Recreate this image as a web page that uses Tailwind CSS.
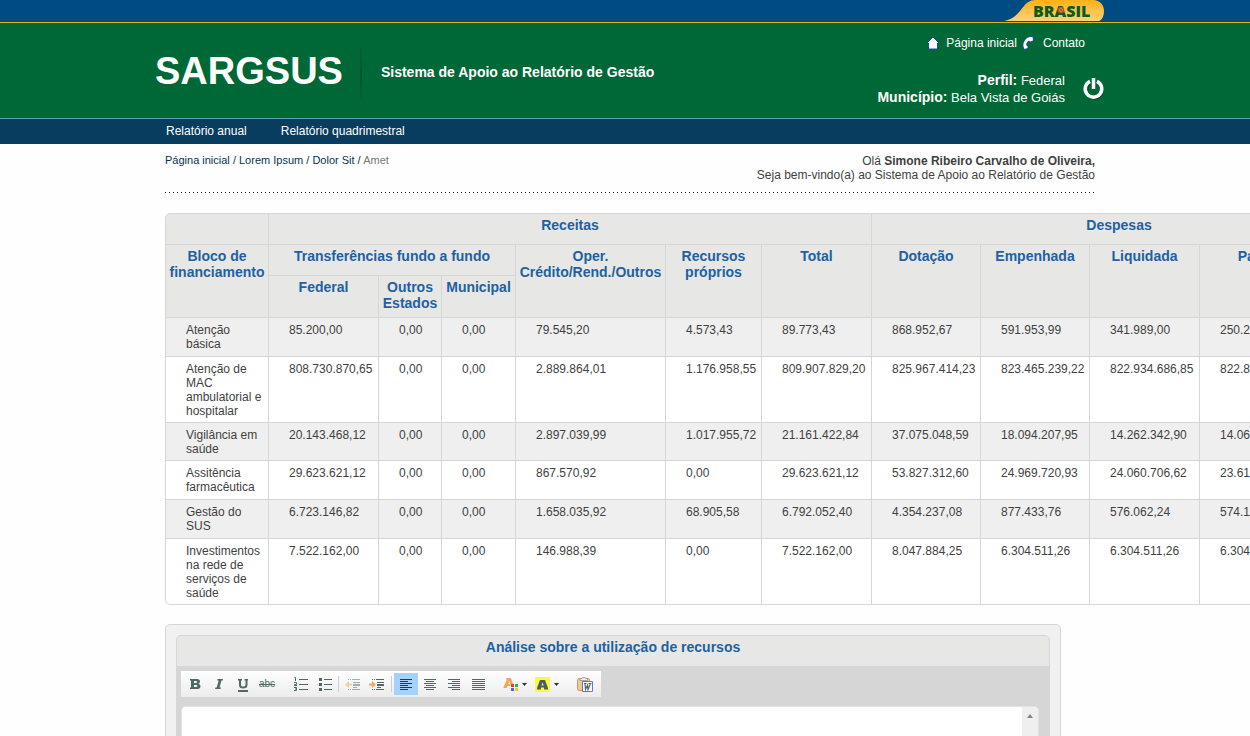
<!DOCTYPE html>
<html lang="pt-BR">
<head>
<meta charset="utf-8">
<meta name="viewport" content="width=device-width, initial-scale=1">
<title>SARGSUS - Sistema de Apoio ao Relatório de Gestão</title>
<script src="https://cdn.jsdelivr.net/npm/@tailwindcss/browser@4"></script>
</head>
<body class="overflow-x-hidden bg-[#fefefe] font-['Liberation_Sans',Arial,sans-serif] text-xs leading-[14px] text-[#3f3f3f]">

<div class="border-b border-[#e0b31c] bg-[#004b82]">
  <div class="mx-auto flex h-[22px] max-w-[960px] justify-end pr-px">
    <a href="#" aria-label="Brasil" class="relative block">
      <svg width="100" height="22" viewBox="0 0 100 22" class="block">
        <defs><linearGradient id="gold" x1="0" y1="0" x2="0" y2="1"><stop offset="0" stop-color="#fcb116"/><stop offset="1" stop-color="#fdd27c"/></linearGradient></defs>
        <path d="M0 21 C11 19 15 12 20 6 C24 1 27 0 33 0 H89 C96 0 100 5 100 11 C100 16 98 20 95 21 Z" fill="url(#gold)"/>
      </svg>
      <span class="absolute inset-0 pl-[29px] font-['Open_Sans',sans-serif] text-base leading-[22px] font-extrabold text-[#0b5a1e]">BRASIL</span>
      <svg width="8" height="8" viewBox="0 0 8 8" class="absolute top-[6px] left-[53px]"><circle cx="4" cy="4" r="2.500" fill="#f5a623" stroke="#d9481f" stroke-width="1.500"/><circle cx="4" cy="4" r="1" fill="#1c5fa8"/></svg>
    </a>
  </div>
</div>

<header class="bg-[#006837] text-white">
  <div class="mx-auto flex h-[95px] max-w-[940px] items-start">
    <h1 class="pt-[26px] text-[38px] leading-[44px] font-bold">SARGSUS</h1>
    <div class="mt-5 ml-[17px] h-[62px] w-[2px] bg-linear-to-b from-transparent via-[#00502a] to-transparent"></div>
    <p class="mt-[41px] ml-[19px] text-sm leading-4 font-bold">Sistema de Apoio ao Relatório de Gestão</p>
    <div class="ml-auto pr-[10px]">
      <nav class="flex items-center justify-end pt-3 leading-4" aria-label="Atalhos">
        <a href="#" class="flex items-center">
          <svg width="14" height="14" viewBox="0 0 14 14" class="mr-[6px]"><path d="M7 1 L13 7 H11.500 V13 H2.500 V7 H1 Z" fill="#fff" stroke="#174f9c" stroke-width="1"/></svg>Página inicial</a>
        <a href="#" class="ml-1 flex items-center">
          <svg width="14" height="14" viewBox="0 0 14 14" class="mr-2"><path d="M3.500 13 C0.500 8 4 2 9 1 L11.500 1 L12 4.500 L9 5.500 L8 4.500 C5.500 6 5 8 5.300 9.500 L6.500 10 L6.500 12 Z" fill="#fff" stroke="#174f9c" stroke-width="1.800" paint-order="stroke"/></svg>Contato</a>
      </nav>
      <div class="mt-[21px] flex items-start justify-end text-[13px] leading-4">
        <p class="text-right [&_b]:text-sm [&_b]:leading-4"><b>Perfil:</b> Federal<br><b>Município:</b> Bela Vista de Goiás</p>
        <button type="button" aria-label="Sair" class="mt-[6px] -mr-5 ml-[17px]">
          <svg width="23" height="22" viewBox="0 0 23 22" fill="none" stroke-width="3.500"><path d="M7.500 4 A8 8 0 1 0 15.500 4" stroke="#004d29" transform="translate(1 1)"/><path d="M8 3.300 A8.300 8.300 0 1 0 15 3.300" stroke="#fff"/><path d="M11.500 0 V11" stroke="#fff" stroke-width="3.500"/></svg>
        </button>
      </div>
    </div>
  </div>
</header>

<nav class="border-t border-[#5b9fb8] bg-[#083d60] text-white" aria-label="Principal">
  <div class="mx-auto flex h-[25px] max-w-[940px] gap-[34px] pl-[11px] leading-6">
    <a href="#">Relatório anual</a>
    <a href="#">Relatório quadrimestral</a>
  </div>
</nav>

<main class="mx-auto max-w-[940px] pl-[10px]">
  <div class="flex justify-between pt-[10px]">
    <nav class="text-[11px] leading-[13px] text-[#06344f]" aria-label="Trilha">
      <a href="#">Página inicial</a> / <a href="#">Lorem Ipsum</a> / <a href="#">Dolor Sit</a> / <span class="text-[#77787a]">Amet</span>
    </nav>
    <p class="text-right">Olá <b>Simone Ribeiro Carvalho de Oliveira,</b><br>Seja bem-vindo(a) ao Sistema de Apoio ao Relatório de Gestão</p>
  </div>
  <div class="mt-[10px] h-px bg-[repeating-linear-gradient(to_right,#111_0,#111_1px,transparent_1px,transparent_4px)]"></div>

  <table class="mt-5 w-[1202px] table-fixed border-separate border-spacing-0 overflow-hidden rounded-[5px] border-r border-b border-[#d5d6d7] [&_td]:border-t [&_td]:border-l [&_td]:border-[#d5d6d7] [&_td]:pt-[5px] [&_td]:pl-5 [&_td]:align-top [&_th]:border-t [&_th]:border-l [&_th]:border-[#d5d6d7] [&_th]:pt-[3px] [&_th]:align-top">
    <colgroup><col class="w-[103px]"><col class="w-[110px]"><col class="w-[63px]"><col class="w-[74px]"><col class="w-[150px]"><col class="w-[96px]"><col class="w-[110px]"><col class="w-[109px]"><col class="w-[109px]"><col class="w-[110px]"><col class="w-[110px]"><col class="w-[57px]"></colgroup>
    <thead class="bg-[#e7e7e5] text-sm leading-4 text-[#1d61a3]">
      <tr class="h-[31px]"><th class="rounded-tl-[5px]"></th><th colspan="6">Receitas</th><th colspan="5">Despesas</th></tr>
      <tr class="h-[31px]"><th rowspan="2">Bloco de financiamento</th><th colspan="3">Transferências fundo a fundo</th><th rowspan="2">Oper. Crédito/Rend./Outros</th><th rowspan="2">Recursos próprios</th><th rowspan="2">Total</th><th rowspan="2">Dotação</th><th rowspan="2">Empenhada</th><th rowspan="2">Liquidada</th><th rowspan="2">Paga</th><th rowspan="2"></th></tr>
      <tr class="h-[42px] [&_th]:pt-1"><th>Federal</th><th>Outros Estados</th><th>Municipal</th></tr>
    </thead>
    <tbody>
      <tr class="h-[39px] bg-[#efefef]"><td>Atenção<br>básica</td><td>85.200,00</td><td>0,00</td><td>0,00</td><td>79.545,20</td><td>4.573,43</td><td>89.773,43</td><td>868.952,67</td><td>591.953,99</td><td>341.989,00</td><td>250.274,00</td><td></td></tr>
      <tr class="h-[66px] bg-white [&_td]:pt-1"><td>Atenção de MAC ambulatorial e hospitalar</td><td>808.730.870,65</td><td>0,00</td><td>0,00</td><td>2.889.864,01</td><td>1.176.958,55</td><td>809.907.829,20</td><td>825.967.414,23</td><td>823.465.239,22</td><td>822.934.686,85</td><td>822.862.345,00</td><td></td></tr>
      <tr class="h-[38px] bg-[#efefef]"><td>Vigilância em saúde</td><td>20.143.468,12</td><td>0,00</td><td>0,00</td><td>2.897.039,99</td><td>1.017.955,72</td><td>21.161.422,84</td><td>37.075.048,59</td><td>18.094.207,95</td><td>14.262.342,90</td><td>14.062.342,90</td><td></td></tr>
      <tr class="h-[39px] bg-white"><td>Assitência farmacêutica</td><td>29.623.621,12</td><td>0,00</td><td>0,00</td><td>867.570,92</td><td>0,00</td><td>29.623.621,12</td><td>53.827.312,60</td><td>24.969.720,93</td><td>24.060.706,62</td><td>23.610.706,62</td><td></td></tr>
      <tr class="h-[39px] bg-[#efefef]"><td>Gestão do SUS</td><td>6.723.146,82</td><td>0,00</td><td>0,00</td><td>1.658.035,92</td><td>68.905,58</td><td>6.792.052,40</td><td>4.354.237,08</td><td>877.433,76</td><td>576.062,24</td><td>574.162,24</td><td></td></tr>
      <tr class="h-[66px] bg-white [&_td]:pt-1"><td class="rounded-bl-[5px]">Investimentos na rede de serviços de saúde</td><td>7.522.162,00</td><td>0,00</td><td>0,00</td><td>146.988,39</td><td>0,00</td><td>7.522.162,00</td><td>8.047.884,25</td><td>6.304.511,26</td><td>6.304.511,26</td><td>6.304.511,26</td><td></td></tr>
    </tbody>
  </table>

  <section class="mt-[19px] w-full max-w-[896px] rounded-[5px] border border-[#d5d6d7] bg-[#f1f1f1] p-[10px]">
    <div class="overflow-hidden rounded-[5px] border border-[#d5d6d7] bg-[#d6d6d6]">
      <h2 class="h-[30px] bg-[#e7e7e5] pt-[3px] text-center text-sm leading-4 font-bold text-[#1d61a3]"><label for="analise">Análise sobre a utilização de recursos</label></h2>
      <div class="p-1 pr-[10px]">
        <div role="toolbar" aria-label="Formatação" class="mt-px flex h-[26px] w-[420px] items-center bg-linear-to-b from-white to-[#ececec] pl-[2px] text-[#4d6a66]">
          <button type="button" aria-label="Negrito" class="flex h-[22px] w-6 items-center justify-center"><svg width="12" height="12" viewBox="0 0 12 12"><path fill-rule="evenodd" d="M1 1 H8 Q11 1 11 3.500 Q11 5.200 9.500 5.700 Q11.500 6.300 11.500 8.300 Q11.500 11 8.500 11 H1 V9.500 H2 V2.500 H1 Z M5 3 V5 H7 Q8 5 8 4 Q8 3 7 3 Z M5 7 V9 H7.200 Q8.300 9 8.300 8 Q8.300 7 7.200 7 Z" fill="currentColor"/></svg></button>
          <button type="button" aria-label="Itálico" class="flex h-[22px] w-6 items-center justify-center"><svg width="12" height="12" viewBox="0 0 12 12"><path d="M4.500 1 H10 L9.700 2.500 H8.500 L6.500 9.500 H8 L7.500 11 H2 L2.500 9.500 H3.700 L5.700 2.500 H4.200 Z" fill="currentColor"/></svg></button>
          <button type="button" aria-label="Sublinhado" class="flex h-[22px] w-6 items-center justify-center pt-[2px]"><svg width="12" height="14" viewBox="0 0 12 14"><path d="M1 1 H5 V2.500 H4 V7 Q4 8.500 6 8.500 Q8.500 8.500 8.500 7 V2.500 H7.500 V1 H11 V2.500 H10.500 V7 Q10.500 10.500 6 10.500 Q2 10.500 2 7 V2.500 H1 Z M1 12 H11 V14 H1 Z" fill="currentColor"/></svg></button>
          <button type="button" aria-label="Tachado" class="flex h-[22px] w-6 items-center justify-center text-[10px] leading-[22px] line-through">abc</button>
          <button type="button" aria-label="Lista numerada" class="ml-[10px] flex h-[22px] w-6 items-center justify-center"><svg width="14" height="14" viewBox="0 0 14 14" fill="none" stroke="currentColor"><path d="M5 2.500 H14 M5 7.500 H14 M5 12.500 H14"/><path d="M0.500 0.500 H1.500 V4 M0 5.500 H2.500 V7.500 H0.500 V8.500 H3 M0 10.500 H2.500 V13.500 H0 M1 12 H2.500"/></svg></button>
          <button type="button" aria-label="Lista com marcadores" class="flex h-[22px] w-6 items-center justify-center"><svg width="13" height="14" viewBox="0 0 13 14" shape-rendering="crispEdges" fill="currentColor"><path d="M0 1h3v3H0zM0 6h3v3H0zM0 11h3v3H0zM5 2h8v1H5zM5 7h8v1H5zM5 12h8v1H5z"/></svg></button>
          <span class="mr-[2px] ml-px h-4 w-px bg-[#cfcfcf]"></span>
          <button type="button" aria-label="Diminuir recuo" disabled class="flex h-[22px] w-6 items-center justify-center opacity-50"><svg width="16" height="13" viewBox="0 0 16 13"><path d="M3 1.500 H8 M3 11.500 H8" stroke="#4d6a66" stroke-dasharray="1 1"/><path d="M8 1.500h7M8 4.500h7M8 9.500h4M8 11.500h7" stroke="#4d6a66"/><path d="M8 6h7v2H8z" fill="#4d6a66"/><path d="M0 6.500 L4 3 V5.500 H7 V7.500 H4 V10 Z" fill="#f5a94e"/></svg></button>
          <button type="button" aria-label="Aumentar recuo" class="flex h-[22px] w-6 items-center justify-center"><svg width="16" height="13" viewBox="0 0 16 13"><path d="M3 1.500 H8 M3 11.500 H8" stroke="#4d6a66" stroke-dasharray="1 1"/><path d="M8 1.500h7M8 4.500h7M8 9.500h4M8 11.500h7" stroke="#4d6a66"/><path d="M8 6h7v2H8z" fill="#4d6a66"/><path d="M7 6.500 L3 3 V5.500 H0 V7.500 H3 V10 Z" fill="#f5a94e"/></svg></button>
          <span class="mx-[2px] h-4 w-px bg-[#cfcfcf]"></span>
          <button type="button" aria-label="Alinhar à esquerda" aria-pressed="true" class="flex h-[22px] w-6 items-center justify-center bg-[#a3d3fb] text-[#173f45]"><svg width="13" height="11" viewBox="0 0 13 11" shape-rendering="crispEdges" fill="currentColor"><path d="M0 0h12v1H0zM0 2h8v1H0zM0 4h12v1H0zM0 6h8v1H0zM0 8h12v1H0zM0 10h8v1H0z"/></svg></button>
          <button type="button" aria-label="Centralizar" class="flex h-[22px] w-6 items-center justify-center"><svg width="13" height="11" viewBox="0 0 13 11" shape-rendering="crispEdges" fill="currentColor"><path d="M0 0h12v1H0zM2 2h8v1H2zM0 4h12v1H0zM2 6h8v1H2zM0 8h12v1H0zM2 10h8v1H2z"/></svg></button>
          <button type="button" aria-label="Alinhar à direita" class="flex h-[22px] w-6 items-center justify-center"><svg width="13" height="11" viewBox="0 0 13 11" shape-rendering="crispEdges" fill="currentColor"><path d="M0 0h12v1H0zM4 2h8v1H4zM0 4h12v1H0zM4 6h8v1H4zM0 8h12v1H0zM4 10h8v1H4z"/></svg></button>
          <button type="button" aria-label="Justificar" class="flex h-[22px] w-6 items-center justify-center"><svg width="13" height="11" viewBox="0 0 13 11" shape-rendering="crispEdges" fill="currentColor"><path d="M0 0h13v1H0zM0 2h13v1H0zM0 4h13v1H0zM0 6h13v1H0zM0 8h13v1H0zM0 10h13v1H0z"/></svg></button>
          <button type="button" aria-label="Cor do texto" class="ml-[9px] flex h-[22px] w-8 items-center justify-center gap-[2px]"><svg width="17" height="14" viewBox="0 0 17 14"><path fill-rule="evenodd" d="M3 1 H8 L10 7 H7.500 V9 H4.500 L4 11 H0.500 V10 L4 2.500 H3 Z M6.500 4 L5.300 7 H7 Z" fill="#f2a85b"/><path d="M8 7h3v3H8z" fill="#e33b3b"/><path d="M12 7h3v3h-3z" fill="#41a941"/><path d="M8 11h3v3H8z" fill="#3a6be0"/><path d="M12 11h3v3h-3z" fill="#f4c52c"/></svg><svg width="5" height="3" viewBox="0 0 5 3"><path d="M0 0h5L2.500 3z" fill="#333"/></svg></button>
          <button type="button" aria-label="Cor de fundo" class="flex h-[22px] w-8 items-center justify-center gap-1"><svg width="15" height="15" viewBox="0 0 15 15"><path d="M0 0h15v15H0z" fill="#fbfb3e"/><path fill-rule="evenodd" d="M5 3 H10 L13 11 V12.500 H9 V10.500 H6 V12.500 H2 V11 Z M7.500 5.500 L6.500 8.500 H8.700 Z" fill="#4d5c6a"/></svg><svg width="5" height="3" viewBox="0 0 5 3"><path d="M0 0h5L2.500 3z" fill="#333"/></svg></button>
          <button type="button" aria-label="Colar do Word" class="ml-[10px] flex h-[22px] w-6 items-center justify-center"><svg width="16" height="15" viewBox="0 0 16 15"><rect x="0.500" y="1.500" width="12" height="12" rx="1.500" fill="#f3c797" stroke="#cf9c66"/><path d="M3 3.500V1.500H5L5.500 0.500H8L8.500 1.500H10.500V3.500Z" fill="#eee" stroke="#8b8b8b" stroke-width="0.700"/><path d="M5.500 4.500h10v10h-10z" fill="#fff" stroke="#5b7ccc"/><path d="M7 6.500h2.500M8 7l0.500 5.500 2-4.500 0.500 4.500 2.500-6M11.500 6.500h3" fill="none" stroke="#5a6670" stroke-width="1.200"/></svg></button>
        </div>
        <div class="mt-[9px] flex h-[200px] overflow-hidden rounded-[5px] border border-[#e2e2e2] bg-white">
          <textarea id="analise" class="flex-1 resize-none overflow-hidden bg-white p-2 outline-none"></textarea>
          <div class="flex w-4 justify-center bg-[#efefef] pt-[7px]" aria-hidden="true"><svg width="6" height="4" viewBox="0 0 6 4"><path d="M3 0L6 4H0z" fill="#858585"/></svg></div>
        </div>
      </div>
    </div>
  </section>
</main>
</body>
</html>
